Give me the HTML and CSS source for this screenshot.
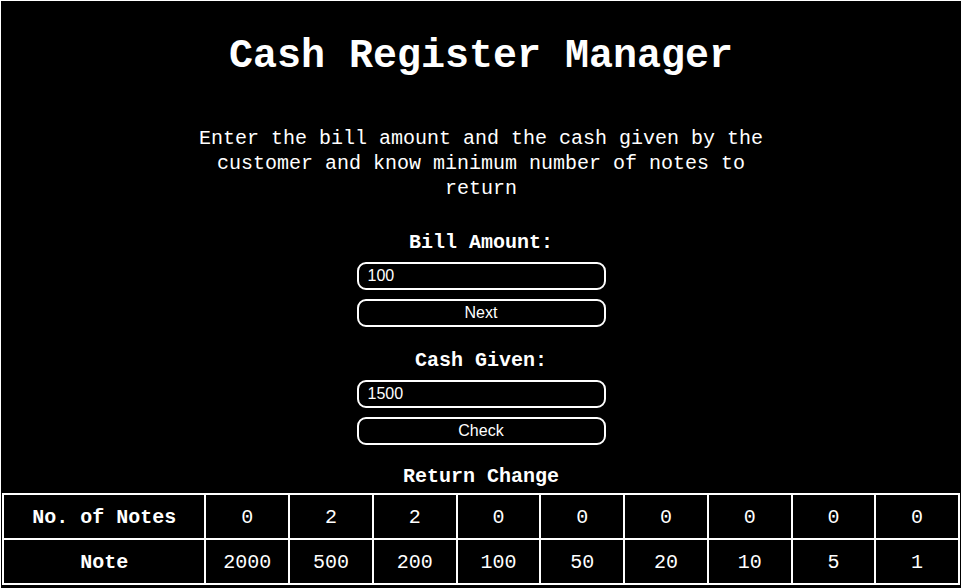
FILE: index.html
```html
<!DOCTYPE html>
<html lang="en">
<head>
<meta charset="utf-8">
<title>Cash Register Manager</title>
<link rel="stylesheet" href="styles.css">
</head>
<body>
<div class="page">
  <h1 class="title">Cash Register Manager</h1>
  <p class="intro">Enter the bill amount and the cash given by the customer and know minimum number of notes to return</p>
  <div class="form">
    <label class="label label-bill" for="bill">Bill Amount:</label>
    <input class="field" id="bill" type="text" value="100">
    <button class="btn">Next</button>
    <label class="label label-cash" for="cash">Cash Given:</label>
    <input class="field" id="cash" type="text" value="1500">
    <button class="btn">Check</button>
    <div class="label label-return">Return Change</div>
  </div>
  <table class="change">
    <tr>
      <th class="head">No. of Notes</th>
      <td>0</td><td>2</td><td>2</td><td>0</td><td>0</td><td>0</td><td>0</td><td>0</td><td>0</td>
    </tr>
    <tr>
      <th class="head">Note</th>
      <td>2000</td><td>500</td><td>200</td><td>100</td><td>50</td><td>20</td><td>10</td><td>5</td><td>1</td>
    </tr>
  </table>
</div>
</body>
</html>
```
FILE: styles.css
```css
html, body {
  margin: 0;
  padding: 0;
  background: #000;
}
body {
  color: #fff;
  font-family: "Liberation Mono", "DejaVu Sans Mono", monospace;
}
.page {
  box-sizing: border-box;
  height: 588px;
  border: 1px solid #fff;
  border-bottom: none;
  display: flex;
  flex-direction: column;
  align-items: center;
  overflow: hidden;
}
.title {
  margin: 32px 0 0;
  font-size: 40px;
  line-height: 48px;
  font-weight: bold;
}
.intro {
  margin: 45px 0 0;
  width: 580px;
  text-align: center;
  font-size: 20px;
  line-height: 25px;
}
.form {
  display: flex;
  flex-direction: column;
  align-items: center;
  margin-top: 31px;
}
.label {
  font-size: 20px;
  line-height: 22px;
  font-weight: bold;
}
.label-cash { margin-top: 23px; }
.label-return { margin-top: 21px; }
.field, .btn {
  box-sizing: border-box;
  width: 249px;
  height: 28px;
  border: 2px solid #fff;
  border-radius: 9px;
  background: #000;
  color: #fff;
  font-family: "Liberation Sans", Arial, sans-serif;
  font-size: 16px;
  margin: 0;
}
.field {
  margin-top: 8px;
  padding: 0 9px;
  outline: none;
}
.btn {
  margin-top: 9px;
  padding: 0;
  text-align: center;
}
.change {
  margin-top: 5px;
  width: 958px;
  border: 1px solid #fff;
  border-spacing: 0;
  font-size: 20px;
}
.change th, .change td {
  box-sizing: border-box;
  border: 1px solid #fff;
  height: 45px;
  padding: 2px 0 0;
  text-align: center;
  width: 84px;
}
.change .head {
  width: 203px;
  font-weight: bold;
}
```
